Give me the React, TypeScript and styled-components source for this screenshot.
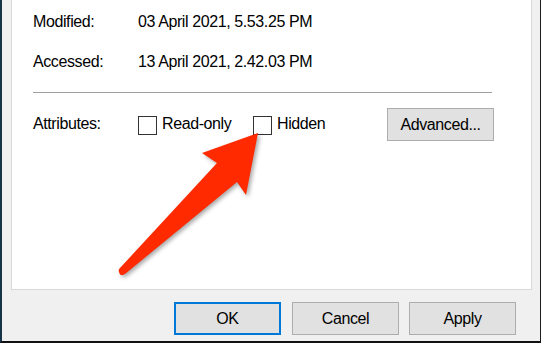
import React from 'react';
import styled, { createGlobalStyle } from 'styled-components';

const Global = createGlobalStyle`
    html, body {
        margin: 0;
        padding: 0;
        background: #ffffff;
    }
    * {
        box-sizing: border-box;
    }
`

const Frame = styled.div`
    position: relative;
    width: 541px;
    height: 343px;
    background: #f0f0f0;
    border-left: 2px solid #173446;
    border-right: 1px solid #1c1c1c;
    border-bottom: 2px solid #111111;
    font-family: "Liberation Sans", Arial, sans-serif;
    font-size: 16px;
    letter-spacing: -0.4px;
    color: #000000;
    overflow: hidden;
`

const Panel = styled.div`
    margin-left: 9px;
    width: 521px;
    height: 290px;
    background: #ffffff;
    border: 1px solid #d9d9d9;
    border-top: none;
    padding: 2px 0 0 21px;
`

const InfoRow = styled.div`
    display: grid;
    grid-template-columns: 105px 1fr;
    height: 40px;
    line-height: 40px;
    white-space: nowrap;
`

const Separator = styled.div`
    margin-top: 10px;
    width: 459px;
    height: 1px;
    background: #a0a0a0;
`

const AttrRow = styled.div`
    margin-top: 15px;
    width: 461px;
    height: 33px;
    display: flex;
    align-items: center;
    white-space: nowrap;
`

const AttrLabel = styled.span`
    width: 105px;
    margin-top: -2px;
`

const Check = styled.label<{ $w: number }>`
    width: ${p => p.$w}px;
    display: flex;
    align-items: center;
    gap: 5px;
`

const Box = styled.span`
    width: 19px;
    height: 19px;
    margin-top: 1px;
    border: 1px solid #333333;
    background: #ffffff;
    flex: none;
`

const CheckText = styled.span`
    margin-top: -2px;
`

const Button = styled.button<{ $default?: boolean }>`
    width: 107px;
    height: 33px;
    padding: 0;
    background: #e1e1e1;
    border: ${p => (p.$default ? '2px solid #0078d7' : '1px solid #adadad')};
    font-family: inherit;
    font-size: 16px;
    letter-spacing: -0.4px;
    color: #000000;
`

const AdvancedButton = styled(Button)`
    margin-left: auto;
`

const Footer = styled.div`
    margin-top: 12px;
    padding-right: 24px;
    display: flex;
    justify-content: flex-end;
    gap: 10px;
`

const OkButton = styled(Button)`
    margin-right: 1px;
`

const Arrow = styled.svg`
    position: absolute;
    left: -2px;
    top: 0;
    filter: drop-shadow(2px 2px 2px rgba(0, 0, 0, 0.35));
    pointer-events: none;
`

export default function App() {
    return (
        <>
            <Global />
            <Frame>
                <Panel>
                    <InfoRow>
                        <span>Modified:</span>
                        <span>03 April 2021, 5.53.25 PM</span>
                    </InfoRow>
                    <InfoRow>
                        <span>Accessed:</span>
                        <span>13 April 2021, 2.42.03 PM</span>
                    </InfoRow>
                    <Separator />
                    <AttrRow>
                        <AttrLabel>Attributes:</AttrLabel>
                        <Check $w={115}>
                            <Box />
                            <CheckText>Read-only</CheckText>
                        </Check>
                        <Check $w={90}>
                            <Box />
                            <CheckText>Hidden</CheckText>
                        </Check>
                        <AdvancedButton>Advanced...</AdvancedButton>
                    </AttrRow>
                </Panel>
                <Footer>
                    <OkButton $default>OK</OkButton>
                    <Button>Cancel</Button>
                    <Button>Apply</Button>
                </Footer>
                <Arrow width="541" height="343" viewBox="0 0 541 343">
                    <path
                        d="M258 133 L246 195 L237 182 L125 274 Q120 277 119 272 Q118 270 120 268 L217 163 L202 153 Z"
                        fill="#ff2a00"
                        strokeLinejoin="round"
                    />
                </Arrow>
            </Frame>
        </>
    );
}
